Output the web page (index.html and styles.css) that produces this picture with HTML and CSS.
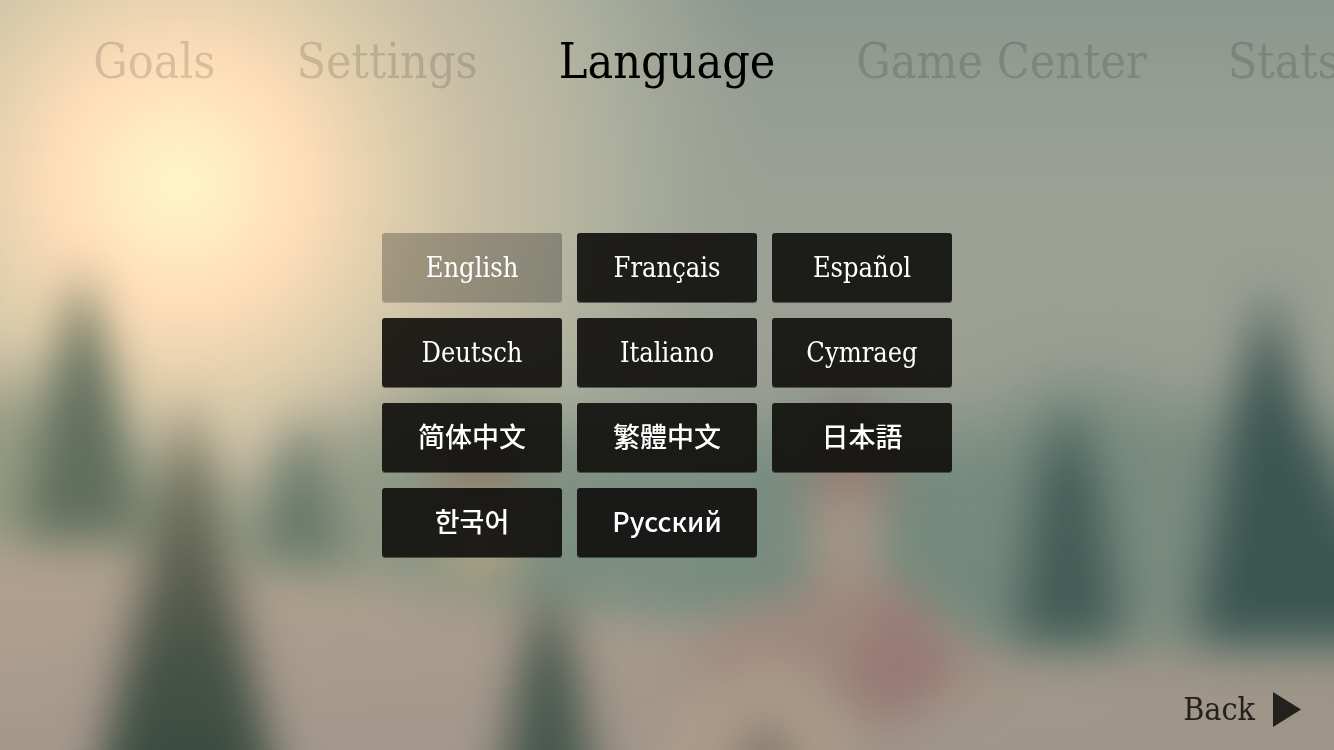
FILE: index.html
```html
<!DOCTYPE html>
<html lang="en">
<head>
    <meta charset="UTF-8">
    <meta name="viewport" content="width=device-width, initial-scale=1.0">
    <title>Language</title>
    <link rel="stylesheet" href="styles.css">
</head>
<body>
    <!-- Scenery -->
    <svg class="scene" viewBox="0 0 1334 750" preserveAspectRatio="xMidYMid slice" aria-hidden="true">
        <defs>
            <linearGradient id="sky" x1="0" y1="0" x2="0" y2="1">
                <stop offset="0" stop-color="#8b978f"/>
                <stop offset="0.13" stop-color="#969d93"/>
                <stop offset="0.28" stop-color="#9ba195"/>
                <stop offset="0.5" stop-color="#9c9f94"/>
                <stop offset="1" stop-color="#9c9f94"/>
            </linearGradient>
            <radialGradient id="sun" gradientUnits="userSpaceOnUse" cx="180" cy="183" r="600">
                <stop offset="0" stop-color="#fff4c8"/>
                <stop offset="0.05" stop-color="#fff0c6"/>
                <stop offset="0.11" stop-color="#ffe9c0"/>
                <stop offset="0.18" stop-color="#fee0b9"/>
                <stop offset="0.23" stop-color="#f9dbb6"/>
                <stop offset="0.31" stop-color="#e8d2b0"/>
                <stop offset="0.39" stop-color="#d8caab"/>
                <stop offset="0.5" stop-color="#c8bea6"/>
                <stop offset="0.6" stop-color="#bcb8a2"/>
                <stop offset="0.72" stop-color="#adb09d"/>
                <stop offset="0.86" stop-color="#a0a598" stop-opacity="0.8"/>
                <stop offset="1" stop-color="#9ba195" stop-opacity="0"/>
            </radialGradient>
            <linearGradient id="forest" x1="0" y1="0" x2="1" y2="0">
                <stop offset="0" stop-color="#939a80"/>
                <stop offset="0.28" stop-color="#989d86"/>
                <stop offset="0.42" stop-color="#7f9083"/>
                <stop offset="0.65" stop-color="#748a7e"/>
                <stop offset="1" stop-color="#7f8c81"/>
            </linearGradient>
            <linearGradient id="ground" x1="0" y1="0" x2="1" y2="0">
                <stop offset="0" stop-color="#b2a18f"/>
                <stop offset="0.35" stop-color="#ab9e8d"/>
                <stop offset="1" stop-color="#9d9486"/>
            </linearGradient>
            <linearGradient id="groundShade" x1="0" y1="0" x2="0" y2="1">
                <stop offset="0" stop-color="#9d938a" stop-opacity="0"/>
                <stop offset="1" stop-color="#9d938a" stop-opacity="0.8"/>
            </linearGradient>
            <linearGradient id="nearTree" x1="0" y1="0" x2="0" y2="1">
                <stop offset="0" stop-color="#77765e"/>
                <stop offset="0.35" stop-color="#5d6150"/>
                <stop offset="0.6" stop-color="#445146"/>
                <stop offset="1" stop-color="#33463c"/>
            </linearGradient>
            <filter id="soft" filterUnits="userSpaceOnUse" x="-150" y="-150" width="1634" height="1050" color-interpolation-filters="sRGB">
                <feGaussianBlur stdDeviation="23"/>
            </filter>
            <filter id="haze" filterUnits="userSpaceOnUse" x="-150" y="-150" width="1634" height="1050" color-interpolation-filters="sRGB">
                <feGaussianBlur stdDeviation="34"/>
            </filter>
        </defs>
        <rect width="1334" height="750" fill="url(#sky)"/>
        <rect width="1334" height="750" fill="url(#sun)"/>

        <!-- hills and ground -->
        <g filter="url(#haze)">
            <path d="M-150 380 L60 390 L130 460 L250 490 L340 430 L450 385 L560 430 L700 440 L850 410 L960 435 L1080 380 L1170 405 L1250 410 L1484 450 V900 H-150 Z" fill="url(#forest)"/>
        </g>
        <g filter="url(#soft)">
            <path d="M-150 530 L100 545 L330 575 L450 595 L620 615 L780 630 L1000 650 L1484 655 V900 H-150 Z" fill="url(#ground)"/>
            <rect x="-150" y="600" width="1634" height="200" fill="url(#groundShade)"/>
        </g>

        <!-- village -->
        <g filter="url(#soft)">
            <path d="M485 410 L530 495 H430 Z" fill="#8b7768"/>
            <rect x="445" y="500" width="70" height="80" fill="#ada181"/>
            <path d="M850 385 L905 500 H795 Z" fill="#907a71"/>
            <rect x="810" y="490" width="72" height="150" fill="#a49585"/>
            <path d="M650 700 L730 620 L840 580 L905 580 L985 670 L880 740 L800 660 L700 675 Z" fill="#9e887c"/>
            <path d="M890 590 L960 665 L900 720 L840 690 Z" fill="#967973"/>
            <path d="M680 700 L770 655 L840 710 L850 790 H640 Z" fill="#ac9b8a"/>
        </g>

        <!-- trees -->
        <g filter="url(#soft)">
            <path d="M82 265 L112 380 L142 535 H22 L52 380 Z" fill="#616e5c"/>
            <path d="M302 410 L350 560 H254 Z" fill="#69786a"/>
            <path d="M187 390 L215 520 L272 760 L290 860 H84 L102 760 L159 520 Z" fill="url(#nearTree)"/>
            <path d="M548 580 L573 660 L594 770 V860 H502 V770 L523 660 Z" fill="#46564d"/>
            <path d="M1068 400 L1100 490 L1122 640 H1014 L1036 490 Z" fill="#435c56"/>
            <path d="M1268 285 L1304 420 L1360 530 L1484 560 V640 H1196 L1230 430 Z" fill="#3b5551"/>
            <path d="M765 710 L800 790 H730 Z" fill="#756f62"/>
        </g>
    </svg>

    <div class="screen">
        <nav class="tabs">
            <div class="tabs-side tabs-before">
                <a href="#goals">Goals</a>
                <a href="#settings">Settings</a>
            </div>
            <a class="active" href="#language" aria-current="page">Language</a>
            <div class="tabs-side">
                <a href="#game-center">Game Center</a>
                <a href="#stats">Stats</a>
            </div>
        </nav>

        <main class="content">
            <div class="languages">
                <button class="language selected" type="button" lang="en">English</button>
                <button class="language" type="button" lang="fr">Français</button>
                <button class="language" type="button" lang="es">Español</button>
                <button class="language" type="button" lang="de">Deutsch</button>
                <button class="language" type="button" lang="it">Italiano</button>
                <button class="language" type="button" lang="cy">Cymraeg</button>
                <button class="language sans" type="button" lang="zh-Hans">简体中文</button>
                <button class="language sans" type="button" lang="zh-Hant">繁體中文</button>
                <button class="language sans" type="button" lang="ja">日本語</button>
                <button class="language sans" type="button" lang="ko">한국어</button>
                <button class="language sans" type="button" lang="ru">Русский</button>
            </div>
        </main>

        <footer class="footer">
            <button class="back" type="button">
                Back
                <svg width="28" height="35" viewBox="0 0 28 35" aria-hidden="true">
                    <path d="M0 0 L28 17.5 L0 35 Z" fill="currentColor"/>
                </svg>
            </button>
        </footer>
    </div>
</body>
</html>
```
FILE: styles.css
```css
* {
    box-sizing: border-box;
}
body {
    margin: 0;
    background: #9ba195;
    font-family: "DejaVu Serif Condensed", "DejaVu Serif", serif;
}
.scene {
    position: fixed;
    inset: 0;
    z-index: -1;
    width: 100%;
    height: 100%;
}
.screen {
    min-height: 100vh;
    display: flex;
    flex-direction: column;
}

/* Tabs */
.tabs {
    display: flex;
    align-items: center;
    gap: 81px;
    height: 122px;
    overflow: hidden;
    font-size: 48px;
    line-height: 56px;
    white-space: nowrap;
}
.tabs-side {
    flex: 1 1 0;
    min-width: 0;
    display: flex;
    gap: 81px;
}
.tabs-before {
    justify-content: flex-end;
}
.tabs a {
    color: rgba(0, 0, 0, 0.14);
    text-decoration: none;
}
.tabs .active {
    color: #000;
}

/* Languages */
.content {
    flex: 1;
    display: flex;
    align-items: center;
    justify-content: center;
}
.languages {
    display: grid;
    grid-template-columns: repeat(3, 180px);
    gap: 16px 15px;
}
.language {
    height: 69px;
    padding: 0;
    border: 0;
    border-radius: 3px;
    background: rgba(14, 13, 11, 0.9);
    box-shadow: 0 1px 0 rgba(14, 13, 11, 0.5);
    color: #fff;
    font-family: inherit;
    font-size: 27px;
    cursor: pointer;
}
.language.selected {
    background: rgba(14, 13, 11, 0.28);
    box-shadow: 0 1px 0 rgba(14, 13, 11, 0.16);
}
.language.sans {
    padding-bottom: 4px;
    font-family: "Noto Sans CJK SC", sans-serif;
    font-weight: 500;
}
.language.sans:lang(zh-Hant) {
    font-family: "Noto Sans CJK TC", sans-serif;
}
.language.sans:lang(ja) {
    font-family: "Noto Sans CJK JP", sans-serif;
}
.language.sans:lang(ko) {
    font-family: "Noto Sans CJK KR", sans-serif;
}

/* Footer */
.footer {
    display: flex;
    align-items: center;
    justify-content: flex-end;
    height: 82px;
    padding: 0 33px;
}
.back {
    display: flex;
    align-items: center;
    gap: 18px;
    padding: 0;
    border: 0;
    background: none;
    color: #22211e;
    font-family: inherit;
    font-size: 32px;
    cursor: pointer;
}
```
